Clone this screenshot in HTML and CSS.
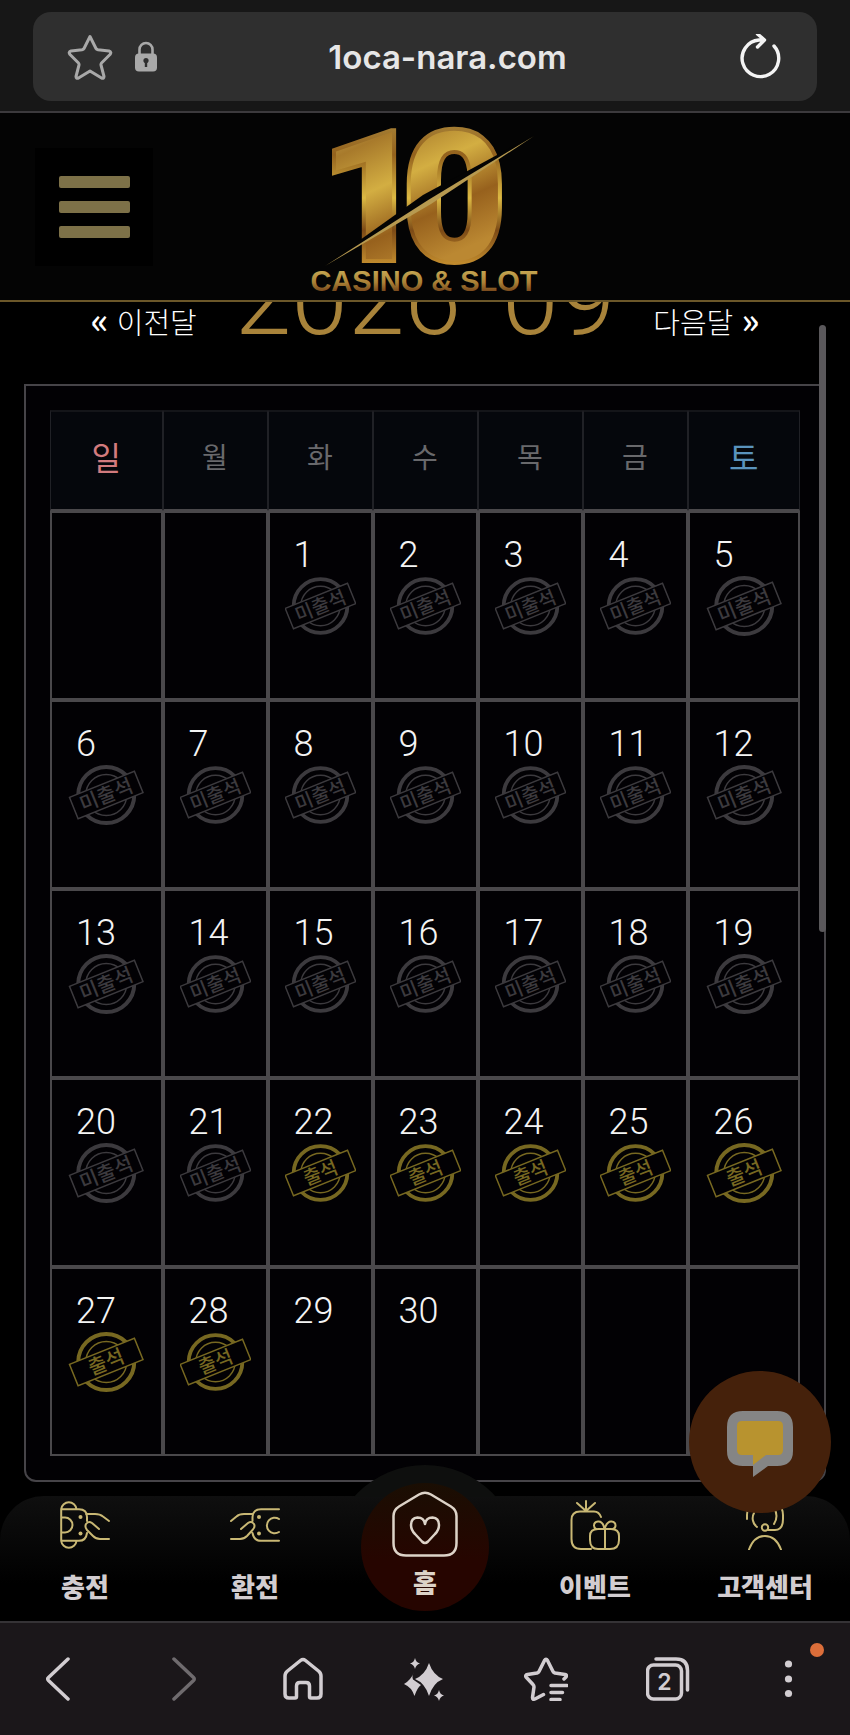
FILE: index.html
```html
<!DOCTYPE html>
<html lang="ko">
<head>
  <meta charset="UTF-8" />
  <meta name="viewport" content="width=device-width, initial-scale=1.0" />
  <title>출석체크</title>
  <link rel="stylesheet" href="styles.css">
</head>
<body>
  <!-- stamps -->
  <svg class="defs" width="0" height="0" aria-hidden="true">
    <symbol id="absent" viewBox="0 0 74 62">
      <circle cx="37" cy="31" r="28" fill="none" stroke="currentColor" stroke-width="4" />
      <circle cx="37" cy="31" r="20.5" fill="none" stroke="currentColor" stroke-width="1.5" />
      <g transform="rotate(-22 37 31)">
        <rect x="2" y="19.500" width="70" height="23" fill="#020104" stroke="currentColor" stroke-width="1.5" />
        <text x="37" y="38" text-anchor="middle" fill="currentColor">미출석</text>
      </g>
    </symbol>
    <symbol id="present" viewBox="0 0 74 62">
      <circle cx="37" cy="31" r="28" fill="none" stroke="currentColor" stroke-width="4" />
      <circle cx="37" cy="31" r="20.5" fill="none" stroke="currentColor" stroke-width="1.5" />
      <g transform="rotate(-22 37 31)">
        <rect x="2" y="19.500" width="70" height="23" fill="#020104" stroke="currentColor" stroke-width="1.5" />
        <text x="37" y="38" text-anchor="middle" fill="currentColor">출석</text>
      </g>
    </symbol>
  </svg>

  <div class="browser-top">
    <div class="address">
      <button class="icon-btn" aria-label="북마크">
        <svg width="46" height="46" viewBox="0 0 46 46" fill="none" stroke="#a9a9a9" stroke-width="3" stroke-linejoin="round"><path d="M23 2.500 L29 14.500 Q29.500 15.500 31 15.800 L42 17 Q45 18 43 20.500 L34.500 29 Q33.800 30 34 31 L37 42.500 Q37 45 34.500 44 L23 37 L11.500 44 Q9 45 9 42.500 L12 31 Q12.200 30 11.500 29 L3 20.500 Q1 18 4 17 L15 15.800 Q16.500 15.500 17 14.500 Z" /></svg>
      </button>
      <svg class="lock" width="24" height="32" viewBox="0 0 24 32"><path d="M5.500 14 V8.500 A6.500 6.500 0 0 1 18.500 8.500 V14" fill="none" stroke="#a9a9a9" stroke-width="2.600" /><rect x="1" y="12.500" width="22" height="18" rx="4" fill="#a9a9a9" /><circle cx="12" cy="19.500" r="2.600" fill="#2f2f2f" /><path d="M12 19 V26" stroke="#2f2f2f" stroke-width="2.400" /></svg>
      <input class="url" type="text" value="1oca-nara.com" aria-label="주소" readonly>
      <button class="icon-btn" aria-label="새로고침">
        <svg width="46" height="46" viewBox="0 0 46 46" fill="none" stroke="#f4f4f4" stroke-width="3.400" stroke-linecap="round" stroke-linejoin="round"><path d="M37 12 A18.300 18.300 0 1 1 22 6 H27 M20.500 0 L27.500 6 L20.500 13" /></svg>
      </button>
    </div>
  </div>

  <header class="site-header">
    <button class="menu-btn" aria-label="메뉴"><span></span><span></span><span></span></button>
    <a class="logo" href="#" aria-label="10 Casino &amp; Slot">
      <svg width="240" height="182" viewBox="0 0 240 182">
        <defs>
          <linearGradient id="gold" x1="0" y1="0" x2="0" y2="1">
            <stop offset="0" stop-color="#b9a04f" />
            <stop offset="0.300" stop-color="#94621d" />
            <stop offset="0.500" stop-color="#dcb943" />
            <stop offset="0.650" stop-color="#7c4a16" />
            <stop offset="0.800" stop-color="#c08a2d" />
            <stop offset="1" stop-color="#7c4a16" />
          </linearGradient>
          <linearGradient id="face" x1="0" y1="0" x2="0.400" y2="1">
            <stop offset="0.100" stop-color="#c9b25c" />
            <stop offset="0.300" stop-color="#a87a2b" />
            <stop offset="0.500" stop-color="#d3ae42" />
            <stop offset="0.700" stop-color="#97611d" />
            <stop offset="0.900" stop-color="#bb8832" />
          </linearGradient>
          <linearGradient id="words" x1="0" y1="0" x2="0" y2="1">
            <stop offset="0.200" stop-color="#c3a450" />
            <stop offset="0.550" stop-color="#a98035" />
            <stop offset="0.850" stop-color="#74431a" />
          </linearGradient>
        </defs>
        <text class="logo-ten" y="145" fill="url(#face)" stroke="url(#gold)" stroke-width="4"><tspan x="14">1</tspan><tspan x="96">0</tspan></text>
        <path d="M34 139 L118 79 L216 26 L229 20 L20 150 Z" fill="#040404" />
        <path d="M20 150 L124 83.500 L229 20 L126 88 Z" fill="#b79a50" />
        <text class="logo-words" x="119" y="175" text-anchor="middle" fill="url(#words)">CASINO &amp; SLOT</text>
      </svg>
    </a>
  </header>

  <main>
    <div class="month-bar">
      <a href="#" class="month-link"><b>«</b> 이전달</a>
      <h1 class="month"><span>2026</span><span>09</span></h1>
      <a href="#" class="month-link">다음달 <b>»</b></a>
    </div>

    <section class="card">
      <table class="calendar">
        <thead>
          <tr><th class="sun">일</th><th>월</th><th>화</th><th>수</th><th>목</th><th>금</th><th class="sat">토</th></tr>
        </thead>
        <tbody>
          <tr>
            <td></td>
            <td></td>
            <td><span class="day">1</span><svg class="stamp"><use href="#absent" /></svg></td>
            <td><span class="day">2</span><svg class="stamp"><use href="#absent" /></svg></td>
            <td><span class="day">3</span><svg class="stamp"><use href="#absent" /></svg></td>
            <td><span class="day">4</span><svg class="stamp"><use href="#absent" /></svg></td>
            <td><span class="day">5</span><svg class="stamp"><use href="#absent" /></svg></td>
          </tr>
          <tr>
            <td><span class="day">6</span><svg class="stamp"><use href="#absent" /></svg></td>
            <td><span class="day">7</span><svg class="stamp"><use href="#absent" /></svg></td>
            <td><span class="day">8</span><svg class="stamp"><use href="#absent" /></svg></td>
            <td><span class="day">9</span><svg class="stamp"><use href="#absent" /></svg></td>
            <td><span class="day">10</span><svg class="stamp"><use href="#absent" /></svg></td>
            <td><span class="day">11</span><svg class="stamp"><use href="#absent" /></svg></td>
            <td><span class="day">12</span><svg class="stamp"><use href="#absent" /></svg></td>
          </tr>
          <tr>
            <td><span class="day">13</span><svg class="stamp"><use href="#absent" /></svg></td>
            <td><span class="day">14</span><svg class="stamp"><use href="#absent" /></svg></td>
            <td><span class="day">15</span><svg class="stamp"><use href="#absent" /></svg></td>
            <td><span class="day">16</span><svg class="stamp"><use href="#absent" /></svg></td>
            <td><span class="day">17</span><svg class="stamp"><use href="#absent" /></svg></td>
            <td><span class="day">18</span><svg class="stamp"><use href="#absent" /></svg></td>
            <td><span class="day">19</span><svg class="stamp"><use href="#absent" /></svg></td>
          </tr>
          <tr>
            <td><span class="day">20</span><svg class="stamp"><use href="#absent" /></svg></td>
            <td><span class="day">21</span><svg class="stamp"><use href="#absent" /></svg></td>
            <td><span class="day">22</span><svg class="stamp done"><use href="#present" /></svg></td>
            <td><span class="day">23</span><svg class="stamp done"><use href="#present" /></svg></td>
            <td><span class="day">24</span><svg class="stamp done"><use href="#present" /></svg></td>
            <td><span class="day">25</span><svg class="stamp done"><use href="#present" /></svg></td>
            <td><span class="day">26</span><svg class="stamp done"><use href="#present" /></svg></td>
          </tr>
          <tr>
            <td><span class="day">27</span><svg class="stamp done"><use href="#present" /></svg></td>
            <td><span class="day">28</span><svg class="stamp done"><use href="#present" /></svg></td>
            <td><span class="day">29</span></td>
            <td><span class="day">30</span></td>
            <td></td>
            <td></td>
            <td></td>
          </tr>
        </tbody>
      </table>
    </section>
    <div class="scrollbar"></div>
  </main>

  <nav class="site-nav">
    <a href="#">
      <svg width="50" height="50" viewBox="0 0 50 50"><path d="M1.200 9 V41 M1.200 9 A7.700 7.700 0 0 1 16.500 9 M1.200 41 A7.700 7.700 0 0 0 16.500 41 M1.200 9.200 H19 Q27 9.200 27 17 V21 M1.200 40.800 H19 Q26 40.800 27 33 M1.200 17.500 H5 A7.500 7.500 0 0 1 5 32.500 H1.200 M26 14 H35 Q40 14 43 16.500 L49 21 M39 29 L32 23 Q28.500 20.500 26 24 Q24.500 27 27 30 L33 36 Q36 39 40 39 H49" /><circle class="dot" cx="20.500" cy="17" r="2" /><circle class="dot" cx="20.500" cy="33.500" r="2" /></svg>
      <span>충전</span>
    </a>
    <a href="#">
      <svg width="50" height="50" viewBox="0 0 50 50"><path d="M49 9.200 H31 Q23 9.200 22.500 17 V21 M49 40.800 H31 Q24 40.800 22.500 33 M49 19 A7.800 7.800 0 1 0 49 32 M23 14 H14 Q9 14 6.500 16.500 L1 21 M11 29 L18 23 Q21.500 20.500 24 24 Q25.500 27 22.500 30 L17 36 Q14 39 10 39 H1" /><circle class="dot" cx="29" cy="17" r="2" /><circle class="dot" cx="29" cy="33.500" r="2" /></svg>
      <span>환전</span>
    </a>
    <a href="#" class="home">
      <svg width="66" height="66" viewBox="0 0 66 66"><path d="M27 3.500 Q33 0 39 3.500 L59 15.500 Q64.500 19 64.500 25 V52 Q64.500 64.500 52 64.500 H14 Q1.500 64.500 1.500 52 V25 Q1.500 19 7 15.500 Z" /><path d="M33 33 Q32 26.500 25.500 26.500 Q19 27 19 34 Q19 39 23 43 L30 50.500 Q33 53.500 36 50.500 L43 43 Q47 39 47 34 Q47 27 40.500 26.500 Q34 26.500 33 33 Z" /></svg>
      <span>홈</span>
    </a>
    <a href="#">
      <svg width="50" height="50" viewBox="0 0 50 50"><path d="M21 49 H11 Q1.500 49 1.500 39 V20 Q1.500 11.500 10 11.500 H24 Q29 11.500 31 17 M16 11 V1 M16 11 L7 3 M16 11 L25 3 M28 29 H41 Q49 29 49 36 V40 Q49 49 40 49 H28 Q20 49 20 40 V36 Q20 29 28 29 Z M35 29 V49 M34.500 29 Q33 21 28 21.500 Q24 22 24 25.500 Q24 28 26 29 M34.500 29 Q37 21 41.500 21.500 Q45.500 22 45.500 25.500 Q45.500 28 43 29" /></svg>
      <span>이벤트</span>
    </a>
    <a href="#">
      <svg width="50" height="50" viewBox="0 0 50 50"><path d="M7 19 V15 A17 16 0 0 1 43 15 V19 Q43 30 35 30 H28 M14 13 A11 11 0 0 0 17 27 M34 8 Q39 16 34 24 M9 49.500 Q14 36 25 36 Q36 36 41 49.500" /><circle cx="25" cy="27.500" r="3.200" /></svg>
      <span>고객센터</span>
    </a>
    <button class="chat" aria-label="채팅 상담">
      <svg width="66" height="66" viewBox="0 0 66 66"><path d="M16 0 H50 Q66 0 66 16 V40 Q66 55 50 55 H41 L26 66 V55 H16 Q0 55 0 40 V16 Q0 0 16 0 Z" fill="#858585" /><path d="M15 10 H51 Q56 10 56 15 V39 Q56 44 51 44 H39 L26 54 V44 H15 Q10 44 10 39 V15 Q10 10 15 10 Z" fill="#b8932f" /></svg>
    </button>
  </nav>

  <div class="browser-bottom">
    <button aria-label="뒤로"><svg width="44" height="44" viewBox="0 0 44 44"><path d="M29 2 L9.500 20.500 Q8 22 9.500 23.500 L29 42" /></svg></button>
    <button aria-label="앞으로"><svg class="off" width="44" height="44" viewBox="0 0 44 44"><path d="M14 2 L33.500 20.500 Q35 22 33.500 23.500 L14 42" /></svg></button>
    <button aria-label="홈"><svg width="44" height="44" viewBox="0 0 44 44"><path d="M18.500 3.500 Q21 1.500 23.500 3.500 L36.500 14 Q39 16 39 19 V37 Q39 41 35 41 H29 Q27.500 41 27.500 39.500 V29 Q27.500 25.500 24 25.500 H18 Q14.500 25.500 14.500 29 V39.500 Q14.500 41 13 41 H7 Q3 41 3 37 V19 Q3 16 5.500 14 Z" /></svg></button>
    <button aria-label="AI"><svg width="44" height="44" viewBox="0 0 44 44"><path class="solid" d="M26 6 Q30 18 40 22 Q30 26 26 39 Q22 26 12 22 Q22 18 26 6 Z M12 1 Q13 5.500 17 6.500 Q13 7.500 12 12 Q11 7.500 7 6.500 Q11 5.500 12 1 Z M36 33 Q37 37.500 41 38.500 Q37 39.500 36 44 Q35 39.500 31 38.500 Q35 37.500 36 33 Z M11 15 Q8.500 19 10 22.500 L18 28 Q14 31 11.500 39 Q8.500 30 1 27 Q8 23 11 15 Z" /></svg></button>
    <button aria-label="북마크 목록"><svg width="44" height="44" viewBox="0 0 44 44"><path d="M19.500 37.500 L11 42 Q8.500 43 8.500 40.500 L10 30 Q10 28.500 9 27.500 L2 20 Q1 18 3.500 17.500 L13 16 Q14.500 15.500 15 14.500 L20.500 3.500 Q22 1 23.500 3.500 L29 14.500 Q29.500 15.500 31 16 L41 17.500 Q43.500 18 42 20 L40 22 M27 28.500 H43 M27 35.500 H38.500 M27 42.500 H36" /></svg></button>
    <button aria-label="탭 2개"><svg width="44" height="44" viewBox="0 0 44 44"><rect x="1.500" y="8" width="34" height="34" rx="6" /><path d="M10 2 H30 Q41.500 2 41.500 13.500 V33" /><text x="18.500" y="33" text-anchor="middle">2</text></svg></button>
    <button aria-label="더보기" class="more"><svg width="44" height="44" viewBox="0 0 44 44"><circle class="solid" cx="21.500" cy="7" r="3.600" /><circle class="solid" cx="21.500" cy="22" r="3.600" /><circle class="solid" cx="21.500" cy="36.500" r="3.600" /></svg></button>
  </div>
</body>
</html>
```

FILE: styles.css
```css
* {
  margin: 0;
  padding: 0;
  box-sizing: border-box;
}

body {
  background: #000;
  color: white;
  min-height: 100vh;
  font-family: Roboto, "Noto Sans CJK KR", sans-serif;
}

a {
  color: inherit;
  text-decoration: none;
}

button {
  background: none;
  border: none;
  cursor: pointer;
}

svg {
  display: block;
}

.defs {
  position: absolute;
}

/* browser address bar */
.browser-top {
  background: #171717;
  padding: 12px 33px 10px;
  border-bottom: 2px solid #3c3a3d;
}

.address {
  display: flex;
  align-items: center;
  height: 89px;
  padding: 0 34px;
  background: #2f2f2f;
  border-radius: 18px;
}

.lock {
  margin-left: 21px;
}

.url {
  flex: 1;
  min-width: 0;
  background: none;
  border: none;
  outline: none;
  color: #e6e6e6;
  font-family: Inter, sans-serif;
  font-size: 33px;
  font-weight: 600;
  text-align: center;
}

/* site header */
.site-header {
  position: relative;
  z-index: 2;
  display: grid;
  grid-template-columns: 1fr auto 1fr;
  align-items: center;
  height: 189px;
  padding: 0 35px;
  background: #040404;
  border-bottom: 2px solid #6b5729;
}

.menu-btn {
  display: flex;
  flex-direction: column;
  justify-content: center;
  align-items: center;
  gap: 13px;
  width: 118px;
  height: 118px;
  background: #000;
}

.menu-btn span {
  width: 71px;
  height: 12px;
  border-radius: 2px;
  background: #7d7148;
}

.logo-ten {
  font-family: Roboto, sans-serif;
  font-size: 184px;
  font-weight: 900;
}

.logo-words {
  font-family: "Liberation Sans", sans-serif;
  font-size: 29px;
  font-weight: bold;
}

/* month switch, its top is under the header */
.month-bar {
  display: flex;
  justify-content: center;
  align-items: baseline;
  gap: 38px;
  margin-top: -53px;
  padding-bottom: 35px;
}

.month {
  display: flex;
  gap: 41px;
  color: #a8833a;
  font-size: 102px;
  line-height: 100px;
  font-weight: 300;
}

.month-link {
  font-family: "Noto Sans CJK KR", sans-serif;
  font-size: 29px;
  line-height: 40px;
  font-weight: 300;
}

.month-link b {
  font-size: 36px;
  line-height: 36px;
  font-weight: 500;
}

/* calendar */
main {
  position: relative;
}

.card {
  margin: 0 24px 14px;
  padding: 24px;
  background: #020104;
  border: 2px solid #464448;
  border-radius: 0 0 12px 12px;
}

.calendar {
  width: 100%;
  table-layout: fixed;
  border-collapse: separate;
  border-spacing: 0;
}

.calendar th {
  height: 101px;
  padding-bottom: 10px;
  background: #05070c;
  border: 1px solid #202126;
  border-top: 2px solid #141519;
  border-bottom: 2px solid #4a484b;
  color: #69696c;
  font-family: "Noto Sans CJK KR", sans-serif;
  font-size: 28px;
  font-weight: 400;
}

.calendar th:first-child,
.calendar th:last-child {
  width: 15%;
  font-size: 32px;
}

.calendar .sun {
  color: #d27b7e;
}

.calendar .sat {
  color: #5a93bd;
}

.calendar td {
  height: 189px;
  padding: 22px 15px 0;
  border: 2px solid #4a484b;
  vertical-align: top;
}

.day {
  display: block;
  padding-left: 9px;
  color: #f4f4f4;
  font-size: 36px;
  line-height: 40px;
  font-weight: 300;
}

.stamp {
  width: 100%;
  height: 62px;
  color: #3c3a3e;
  font-family: "Noto Sans CJK KR", sans-serif;
  font-size: 20px;
  font-weight: 500;
}

.stamp.done {
  color: #776821;
}

.scrollbar {
  position: absolute;
  top: 76px;
  right: 24px;
  width: 7px;
  height: 607px;
  border-radius: 4px;
  background: #5a585b;
}

/* bottom menu */
.site-nav {
  position: relative;
  display: grid;
  grid-template-columns: repeat(5, 1fr);
  height: 125px;
  background: linear-gradient(#0f0f0f, #000 70%);
  border-radius: 44px 44px 0 0;
}

.site-nav a {
  display: flex;
  flex-direction: column;
  align-items: center;
  gap: 16px;
  padding-top: 4px;
  color: #d2cdd0;
  font-family: "Noto Sans CJK KR", sans-serif;
  font-size: 26px;
  line-height: 40px;
  font-weight: 900;
}

.site-nav a svg {
  fill: none;
  stroke: #c9b874;
  stroke-width: 2;
  stroke-linecap: round;
  stroke-linejoin: round;
}

.site-nav .dot {
  fill: #c9b874;
  stroke: none;
}

.site-nav .home {
  position: relative;
  z-index: 1;
  justify-self: center;
  width: 128px;
  height: 128px;
  margin-top: -13px;
  padding-top: 8px;
  gap: 5px;
  border-radius: 50%;
  background: linear-gradient(#1a0e03, #260500 60%);
  color: #ddd3c8;
}

/* bump behind the round home item */
.site-nav::before {
  content: "";
  position: absolute;
  top: -31px;
  left: 50%;
  width: 142px;
  height: 32px;
  margin-left: -71px;
  background: #0e0f0e;
  clip-path: circle(95px at 50% 95px);
}

.site-nav .home svg {
  stroke: #ddd3c8;
  stroke-width: 2.5;
}

.chat {
  position: absolute;
  z-index: 2;
  right: 19px;
  bottom: 108px;
  display: flex;
  align-items: center;
  justify-content: center;
  width: 142px;
  height: 142px;
  padding-top: 4px;
  border-radius: 50%;
  background: #45210b;
}

/* browser toolbar */
.browser-bottom {
  display: grid;
  grid-template-columns: repeat(7, 1fr);
  height: 114px;
  background: #1b171a;
  border-top: 2px solid #353336;
}

.browser-bottom button {
  position: relative;
  display: flex;
  align-items: center;
  justify-content: center;
}

.browser-bottom svg {
  fill: none;
  stroke: #d2cdd1;
  stroke-width: 3.5;
  stroke-linecap: round;
  stroke-linejoin: round;
}

.browser-bottom .off {
  stroke: #6f6b6e;
}

.browser-bottom .solid {
  fill: #d2cdd1;
  stroke: none;
}

.browser-bottom text {
  fill: #d2cdd1;
  stroke: none;
  font-family: Inter, sans-serif;
  font-size: 23px;
  font-weight: 600;
}

.more::after {
  content: "";
  position: absolute;
  top: 20px;
  right: 26px;
  width: 14px;
  height: 14px;
  border-radius: 50%;
  background: #dc6e3a;
}
```
